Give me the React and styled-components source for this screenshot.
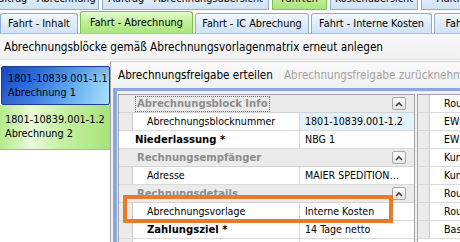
import React from 'react';
import styled, { createGlobalStyle } from 'styled-components';

const Global = createGlobalStyle`
  html, body { margin: 0; padding: 0; background: #fff; overflow: hidden; }
  body {
    font-family: "DejaVu Sans Condensed", "DejaVu Sans", sans-serif;
    font-size: 11px;
    color: #000;
  }
  #root { width: 460px; height: 242px; overflow: hidden; }
`;

const Page = styled.div`
  position: relative;
  width: 460px;
  height: 242px;
  display: flex;
  flex-direction: column;
  overflow: hidden;
  background: #fff;
`;

const TopStrip = styled.div`
  flex: none;
  height: 10px;
  display: flex;
  align-items: flex-end;
  gap: 3px;
  margin-left: -12px;
  overflow: hidden;
  font-size: 10.8px;
`;

const tabBg = (active) =>
  active
    ? 'linear-gradient(180deg, #e4fad0 0%, #c4f09e 45%, #a9e57c 100%)'
    : 'linear-gradient(180deg, #f3f8fe 0%, #e1eefb 45%, #cfe2f7 100%)';

const TopTab = styled.div`
  flex: none;
  width: ${(p) => p.$w}px;
  height: 22px;
  line-height: 20px;
  text-align: center;
  box-sizing: border-box;
  border: 1px solid ${(p) => (p.$active ? '#79c447' : '#8eaccf')};
  border-radius: 3px 3px 0 0;
  background: ${(p) => tabBg(p.$active)};
  white-space: nowrap;
  overflow: hidden;
`;

const TabRow = styled.div`
  flex: none;
  height: 23px;
  display: flex;
  align-items: flex-end;
  gap: 2px;
  border-bottom: 1px solid #a9bfdc;
  font-size: 10.8px;
`;

const Tab = styled.div`
  flex: none;
  width: ${(p) => p.$w}px;
  height: ${(p) => (p.$active ? 22 : 20)}px;
  line-height: ${(p) => (p.$active ? 21 : 19)}px;
  text-align: center;
  box-sizing: border-box;
  border: 1px solid ${(p) => (p.$active ? '#79c447' : '#8eaccf')};
  border-bottom: none;
  border-radius: 3px 3px 0 0;
  background: ${(p) => tabBg(p.$active)};
  white-space: nowrap;
  overflow: hidden;
`;

const Toolbar = styled.div`
  flex: none;
  height: 25px;
  display: flex;
  align-items: center;
  padding-left: 4px;
  font-size: 11.7px;
  background: linear-gradient(180deg, #f8f8f8 0%, #f1f1f1 100%);
  border-bottom: 1px solid #e2e2e2;
  white-space: nowrap;
`;

const Main = styled.div`
  flex: 1;
  display: flex;
  min-height: 0;
`;

const List = styled.div`
  flex: none;
  width: 110px;
  padding-top: 6px;
  display: flex;
  flex-direction: column;
  background: #fff;
  font-size: 10.8px;
`;

const Item = styled.div`
  height: ${(p) => (p.$selected ? 39 : 45)}px;
  box-sizing: border-box;
  display: flex;
  flex-direction: column;
  justify-content: center;
  padding-left: ${(p) => (p.$selected ? 6 : 5)}px;
  line-height: 14px;
  margin-left: ${(p) => (p.$selected ? 1 : 0)}px;
  white-space: nowrap;
  ${(p) =>
    p.$selected
      ? `
    border: 1px solid #1b3f93;
    border-radius: 2px;
    background:
      linear-gradient(180deg, rgba(10,40,140,0.22) 0%, rgba(255,255,255,0) 45%, rgba(255,255,255,0.1) 100%),
      linear-gradient(90deg, #1d52cc 0%, #2e74e2 30%, #5eaaf0 65%, #a0dbfc 100%);
  `
      : `
    border-bottom: 1px solid #8fd163;
    background: linear-gradient(90deg, #b6ea8a 0%, #e9fadb 28%, #c8f1a4 55%, #a8e379 100%);
  `}
`;

const Panel = styled.div`
  flex: 1;
  margin-top: 1px;
  display: flex;
  flex-direction: column;
  border-left: 1px solid #a6a6a6;
  border-top: 1px solid #cfcfcf;
  background: #f0f0f0;
  min-width: 0;
`;

const PanelBar = styled.div`
  flex: none;
  height: 26px;
  display: flex;
  align-items: center;
  gap: 11px;
  padding-left: 7px;
  font-size: 11.6px;
  background: linear-gradient(180deg, #fafafa 0%, #f0f0f0 100%);
  white-space: nowrap;
`;

const BarAction = styled.span`
  color: ${(p) => (p.$disabled ? '#a3a3a3' : '#000')};
`;

const Frame = styled.div`
  flex: 1;
  display: flex;
  gap: 2px;
  margin-left: 2px;
  padding: 3px 0 0 1px;
  border-top: 3px solid #8aa7e2;
  border-left: 4px solid #8aa7e2;
  min-height: 0;
  overflow: hidden;
  font-size: 10.6px;
`;

const PGrid = styled.div`
  flex: none;
  width: 297px;
  box-sizing: border-box;
  border: 1px solid #a3a3a3;
  border-bottom: none;
  background: #fff;
`;

const Category = styled.div`
  height: 18px;
  box-sizing: border-box;
  display: flex;
  align-items: center;
  padding-left: 17px;
  background: #ebebeb;
  border-bottom: 1px solid #d3d3d3;
  font-size: 11.2px;
`;

const CatText = styled.span`
  font-weight: bold;
  color: #8c8c8c;
  line-height: 14px;
  padding: 0 1px;
  outline: ${(p) => (p.$focused ? '1px dotted #6b6b6b' : 'none')};
`;

const Collapse = styled.div`
  margin-left: auto;
  margin-right: 8px;
  width: 14px;
  height: 13px;
  box-sizing: border-box;
  border: 1px solid #a8a8a8;
  border-radius: 2px;
  background: linear-gradient(180deg, #ffffff 0%, #e6e6e6 100%);
  display: flex;
  align-items: center;
  justify-content: center;
`;

const Row = styled.div`
  height: 18px;
  box-sizing: border-box;
  display: grid;
  grid-template-columns: 14px 167px 1fr;
  border-bottom: 1px solid #dadada;
  white-space: nowrap;
`;

const Indent = styled.div`
  background: #ebebeb;
  border-right: 1px solid #c9c9c9;
`;

const Label = styled.div`
  grid-column: ${(p) => (p.$top ? '1 / 3' : 'auto')};
  padding-left: ${(p) => (p.$top ? 16 : 14)}px;
  font-weight: ${(p) => (p.$bold ? 'bold' : 'normal')};
  font-size: ${(p) => (p.$bold ? '11.2px' : 'inherit')};
  line-height: 17px;
  border-right: 1px solid #d6d6d6;
  overflow: hidden;
`;

const Value = styled.div`
  padding-left: 5px;
  line-height: 17px;
  background: ${(p) => (p.$selected ? '#e4f2fb' : '#fff')};
  overflow: hidden;
`;

const SideGrid = styled.div`
  flex: 1;
  border-left: 1px solid #a3a3a3;
  border-top: 1px solid #a3a3a3;
  background: #fff;
`;

const SideRow = styled.div`
  height: 18px;
  box-sizing: border-box;
  display: grid;
  grid-template-columns: 12px 1fr;
  border-bottom: 1px solid #dadada;
  white-space: nowrap;
`;

const SideCell = styled.div`
  padding-left: 14px;
  line-height: 17px;
  overflow: hidden;
`;

const Highlight = styled.div`
  position: absolute;
  left: 123px;
  top: 195px;
  width: 270px;
  height: 28px;
  box-sizing: border-box;
  border: 4px solid #ea7a2a;
  pointer-events: none;
`;

const Chevron = () => (
  <svg width="8" height="6" viewBox="0 0 8 6">
    <path d="M1 5 L4 2 L7 5" fill="none" stroke="#444" strokeWidth="1.6" />
  </svg>
);

const CatRow = ({ text, focused }) => (
  <Category>
    <CatText $focused={focused}>{text}</CatText>
    <Collapse>
      <Chevron />
    </Collapse>
  </Category>
);

const PropRow = ({ label, value, bold, selected }) => (
  <Row>
    <Indent />
    <Label $bold={bold}>{label}</Label>
    <Value $selected={selected}>{value}</Value>
  </Row>
);

export default function App() {
  const side = ['Rou', 'EW', 'EW', 'Kun', 'Kun', 'Rou', 'Rou', 'Bas'];
  return (
    <>
      <Global />
      <Page>
        <TopStrip>
          <TopTab $w={111}>Auftrag - Abrechnung</TopTab>
          <TopTab $w={167}>Auftrag - Abrechnungsübersicht</TopTab>
          <TopTab $w={55} $active>Fahrten</TopTab>
          <TopTab $w={88}>Kostenübersicht</TopTab>
          <TopTab $w={110}>Auftrag - Kosten</TopTab>
        </TopStrip>
        <TabRow>
          <Tab $w={78}>Fahrt - Inhalt</Tab>
          <Tab $w={113} $active>Fahrt - Abrechnung</Tab>
          <Tab $w={114}>Fahrt - IC Abrechung</Tab>
          <Tab $w={121}>Fahrt - Interne Kosten</Tab>
          <Tab $w={90}>Fahrt - Kosten</Tab>
        </TabRow>
        <Toolbar>Abrechnungsblöcke gemäß Abrechnungsvorlagenmatrix erneut anlegen</Toolbar>
        <Main>
          <List>
            <Item $selected>
              <span>1801-10839.001-1.1</span>
              <span>Abrechnung 1</span>
            </Item>
            <Item>
              <span>1801-10839.001-1.2</span>
              <span>Abrechnung 2</span>
            </Item>
          </List>
          <Panel>
            <PanelBar>
              <BarAction>Abrechnungsfreigabe erteilen</BarAction>
              <BarAction $disabled>Abrechnungsfreigabe zurücknehmen</BarAction>
            </PanelBar>
            <Frame>
              <PGrid>
                <CatRow text="Abrechnungsblock Info" focused />
                <PropRow label="Abrechnungsblocknummer" value="1801-10839.001-1.2" selected />
                <Row>
                  <Label $top $bold>Niederlassung *</Label>
                  <Value>NBG 1</Value>
                </Row>
                <CatRow text="Rechnungsempfänger" />
                <PropRow label="Adresse" value="MAIER SPEDITION…" />
                <CatRow text="Rechnungsdetails" />
                <PropRow label="Abrechnungsvorlage" value="Interne Kosten" />
                <PropRow label="Zahlungsziel *" value="14 Tage netto" bold />
                <PropRow label="" value="" />
              </PGrid>
              <SideGrid>
                {side.map((t, i) => (
                  <SideRow key={i}>
                    <Indent />
                    <SideCell>{t}</SideCell>
                  </SideRow>
                ))}
              </SideGrid>
            </Frame>
          </Panel>
        </Main>
        <Highlight />
      </Page>
    </>
  );
}
